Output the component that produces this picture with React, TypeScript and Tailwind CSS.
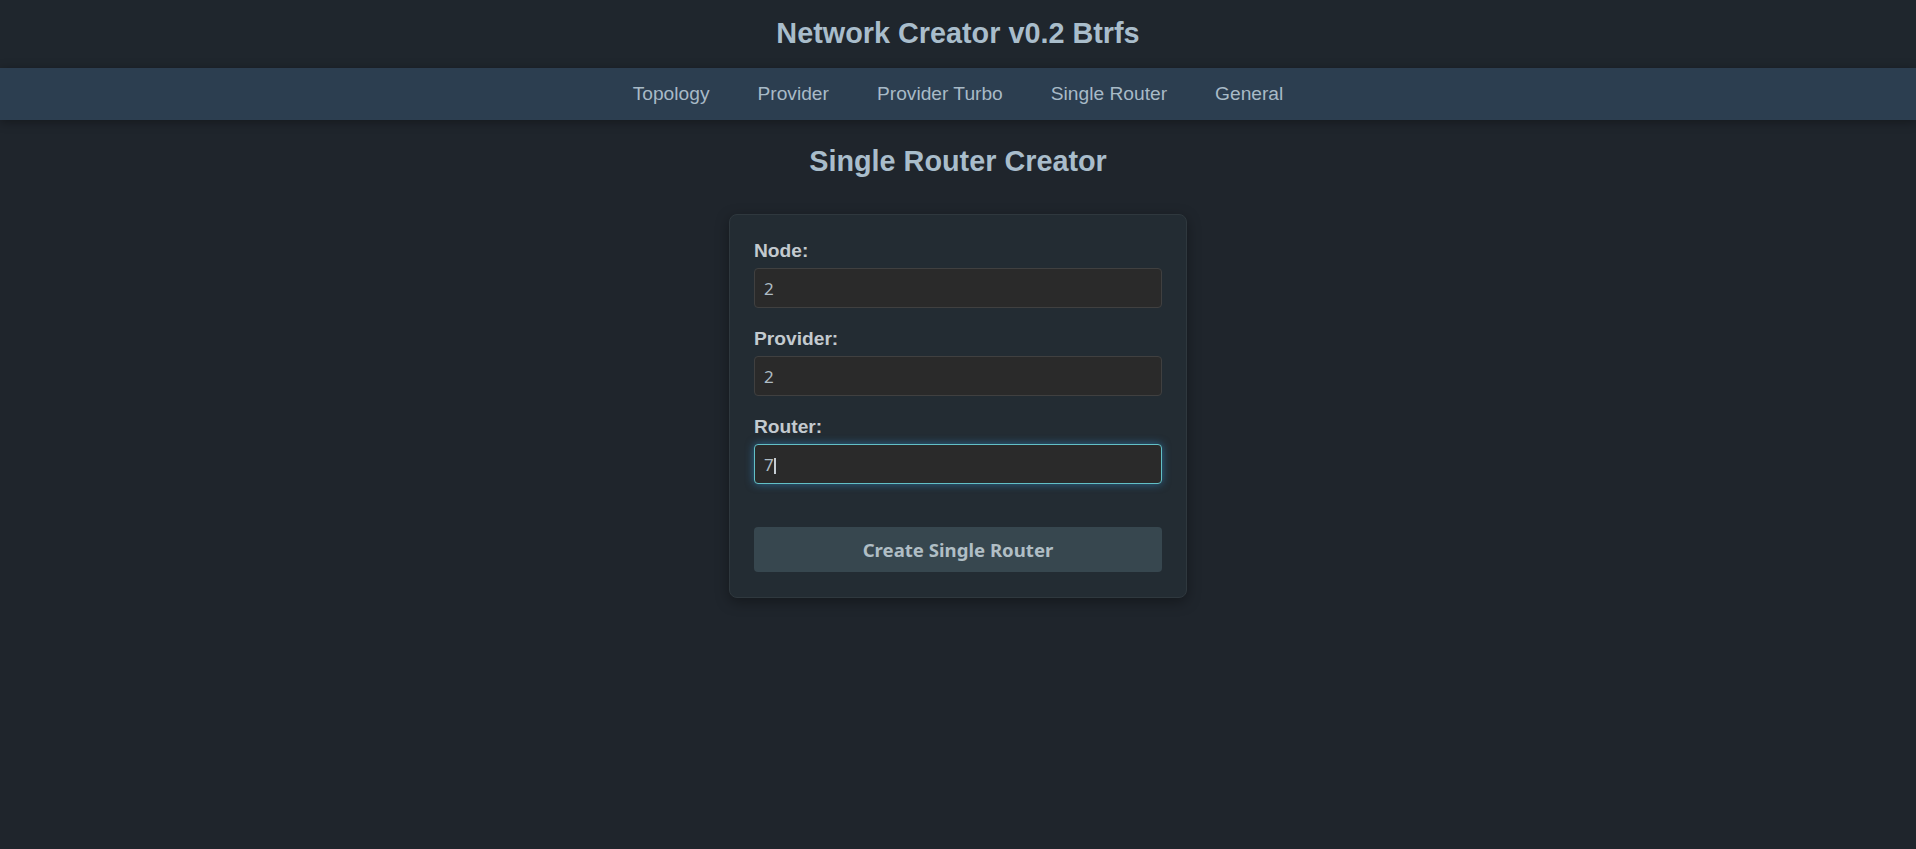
import React from "react";

const navItems = ["Topology", "Provider", "Provider Turbo", "Single Router", "General"];

function Field({ label, value, focused }: { label: string; value: string; focused?: boolean }) {
  return (
    <div className="flex flex-col mb-5">
      <label className="text-[19.2px] leading-[22px] font-bold text-[#c3cacf] mb-[6px]">{label}</label>
      <div className="relative">
        <input
          readOnly
          value={value}
          className={
            focused
              ? "w-full h-10 px-[9px] rounded-[4px] bg-[#2a2a2a] border border-[#62c0c6] shadow-[0_0_8px_rgba(52,152,219,0.55)] text-[#aebcc5] text-[17px] outline-none [font-family:'Noto_Sans',sans-serif]"
              : "w-full h-10 px-[9px] rounded-[4px] bg-[#2a2a2a] border border-[#404040] text-[#aebcc5] text-[17px] outline-none [font-family:'Noto_Sans',sans-serif]"
          }
        />
        {focused && <span className="absolute left-[20px] top-[14px] w-[1.5px] h-[16px] bg-[#c5cdd3]" />}
      </div>
    </div>
  );
}

export default function App() {
  return (
    <div className="min-h-[849px] bg-[#1f252c] [font-family:'Liberation_Sans',Arial,sans-serif]">
      <header className="bg-[#1f262d] pt-[17px] pb-[18px] text-center">
        <h1 className="text-[28.8px] leading-[33px] font-bold text-[#a9bdcb]">Network Creator v0.2 Btrfs</h1>
      </header>
      <nav className="relative bg-[#2c3e50] h-[52px] flex items-center justify-center shadow-[0_2px_10px_rgba(0,0,0,0.35)]">
        {navItems.map((n) => (
          <a key={n} className="px-6 text-[19.2px] leading-[22px] text-[#a8bac7] cursor-pointer">
            {n}
          </a>
        ))}
      </nav>
      <main className="flex flex-col items-center pt-[25px]">
        <h2 className="text-[28.8px] leading-[33px] font-bold text-[#a9bdcb]">Single Router Creator</h2>
        <div className="mt-[36px] w-[458px] bg-[#232c33] border border-[#2f383e] rounded-lg shadow-[0_4px_14px_rgba(0,0,0,0.35)] px-6 pt-[25px] pb-[25px]">
          <Field label="Node:" value="2" />
          <Field label="Provider:" value="2" />
          <Field label="Router:" value="7" focused />
          <button className="mt-[23px] w-full h-[45px] rounded-[4px] bg-[#37474f] text-[#b0bec5] text-[18.6px] font-bold [font-family:'Noto_Sans',sans-serif]">
            Create Single Router
          </button>
        </div>
      </main>
    </div>
  );
}
